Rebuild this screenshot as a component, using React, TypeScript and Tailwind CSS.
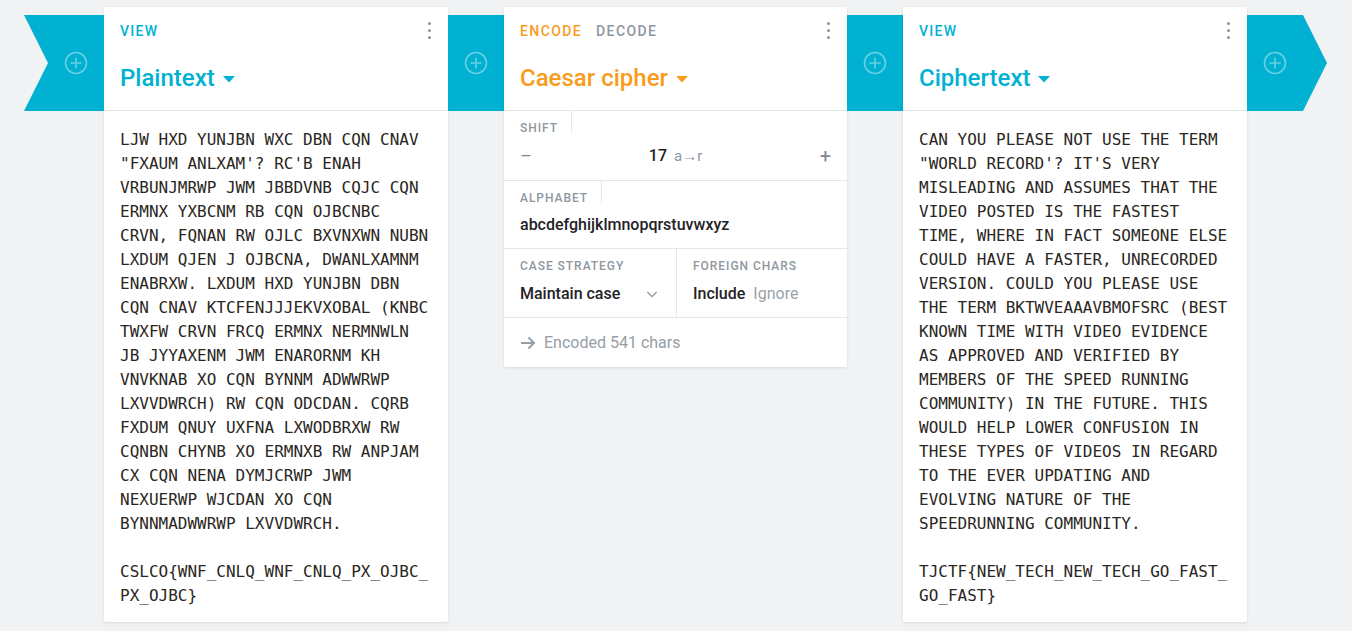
import React from "react";

const plainLines = [
  "LJW HXD YUNJBN WXC DBN CQN CNAV",
  "\"FXAUM ANLXAM'? RC'B ENAH",
  "VRBUNJMRWP JWM JBBDVNB CQJC CQN",
  "ERMNX YXBCNM RB CQN OJBCNBC",
  "CRVN, FQNAN RW OJLC BXVNXWN NUBN",
  "LXDUM QJEN J OJBCNA, DWANLXAMNM",
  "ENABRXW. LXDUM HXD YUNJBN DBN",
  "CQN CNAV KTCFENJJJEKVXOBAL (KNBC",
  "TWXFW CRVN FRCQ ERMNX NERMNWLN",
  "JB JYYAXENM JWM ENARORNM KH",
  "VNVKNAB XO CQN BYNNM ADWWRWP",
  "LXVVDWRCH) RW CQN ODCDAN. CQRB",
  "FXDUM QNUY UXFNA LXWODBRXW RW",
  "CQNBN CHYNB XO ERMNXB RW ANPJAM",
  "CX CQN NENA DYMJCRWP JWM",
  "NEXUERWP WJCDAN XO CQN",
  "BYNNMADWWRWP LXVVDWRCH.",
  "",
  "CSLCO{WNF_CNLQ_WNF_CNLQ_PX_OJBC_",
  "PX_OJBC}",
];

const cipherLines = [
  "CAN YOU PLEASE NOT USE THE TERM",
  "\"WORLD RECORD'? IT'S VERY",
  "MISLEADING AND ASSUMES THAT THE",
  "VIDEO POSTED IS THE FASTEST",
  "TIME, WHERE IN FACT SOMEONE ELSE",
  "COULD HAVE A FASTER, UNRECORDED",
  "VERSION. COULD YOU PLEASE USE",
  "THE TERM BKTWVEAAAVBMOFSRC (BEST",
  "KNOWN TIME WITH VIDEO EVIDENCE",
  "AS APPROVED AND VERIFIED BY",
  "MEMBERS OF THE SPEED RUNNING",
  "COMMUNITY) IN THE FUTURE. THIS",
  "WOULD HELP LOWER CONFUSION IN",
  "THESE TYPES OF VIDEOS IN REGARD",
  "TO THE EVER UPDATING AND",
  "EVOLVING NATURE OF THE",
  "SPEEDRUNNING COMMUNITY.",
  "",
  "TJCTF{NEW_TECH_NEW_TECH_GO_FAST_",
  "GO_FAST}",
];

const PlusCircle = () => (
  <svg width="24" height="24" viewBox="0 0 24 24" fill="none">
    <circle cx="12" cy="12" r="10.5" stroke="rgba(255,255,255,0.4)" strokeWidth="1.6" />
    <path d="M12 6.5v11M6.5 12h11" stroke="rgba(255,255,255,0.4)" strokeWidth="1.6" />
  </svg>
);

const Kebab = () => (
  <div className="flex flex-col items-center gap-[4px]">
    <span className="size-[3px] rounded-full bg-[#8e9297]" />
    <span className="size-[3px] rounded-full bg-[#8e9297]" />
    <span className="size-[3px] rounded-full bg-[#8e9297]" />
  </div>
);

const Caret = ({ color }: { color: string }) => (
  <svg width="12" height="7" viewBox="0 0 12 7" className="ml-[8px] mt-[2px]">
    <path d="M0 0h12L6 6.5z" fill={color} />
  </svg>
);

const FieldLabel = ({ children }: { children: React.ReactNode }) => (
  <div className="flex h-[22px]">
    <div className="border-r border-[#e3e7eb] pr-[13px] pt-[11px] text-[12px] leading-[12px] font-medium tracking-[0.08em] text-[#8e979f] uppercase">
      {children}
    </div>
  </div>
);

const TextCard = ({ title, lines }: { title: string; lines: string[] }) => (
  <div className="mt-[7px] w-[344px] shrink-0 rounded-[2px] bg-white shadow-[0_1px_3px_rgba(0,0,0,0.1)]">
    <div className="h-[104px] border-b border-[#e3e7eb] px-4 pt-[16px]">
      <div className="flex h-[16px] items-center justify-between">
        <span className="text-[14px] font-medium tracking-[0.09em] text-[#00b1d2]">VIEW</span>
        <div className="-mt-[2px] pr-[1px]">
          <Kebab />
        </div>
      </div>
      <div className="mt-[24px] flex h-[30px] items-center text-[24px] font-medium text-[#00b1d2]">
        {title}
        <Caret color="#00b1d2" />
      </div>
    </div>
    <div className="px-4 pt-[17px] pb-[14px] font-['DejaVu_Sans_Mono',monospace] text-[16px] leading-[24px] text-[#2a2622]">
      {lines.map((line, i) => (
        <div key={i} className="h-[24px] whitespace-pre">
          {line}
        </div>
      ))}
    </div>
  </div>
);

const Gap = () => (
  <div className="mt-[15px] flex h-[96px] w-[56px] shrink-0 items-center justify-center bg-[#00b1d2]">
    <PlusCircle />
  </div>
);

const CaesarCard = () => (
  <div className="mt-[7px] w-[343px] shrink-0 rounded-[2px] bg-white shadow-[0_1px_3px_rgba(0,0,0,0.1)]">
    <div className="h-[104px] border-b border-[#e3e7eb] px-4 pt-[16px]">
      <div className="flex h-[16px] items-center justify-between">
        <div className="flex gap-[14px] text-[14px] font-medium tracking-[0.1em]">
          <span className="text-[#f99c1c]">ENCODE</span>
          <span className="text-[#8e979f]">DECODE</span>
        </div>
        <div className="-mt-[2px] pr-[1px]">
          <Kebab />
        </div>
      </div>
      <div className="mt-[24px] flex h-[30px] items-center text-[24px] font-medium text-[#f99c1c]">
        Caesar cipher
        <Caret color="#f99c1c" />
      </div>
    </div>

    <div className="h-[70px] border-b border-[#e3e7eb] px-4">
      <FieldLabel>Shift</FieldLabel>
      <div className="mt-[11px] flex h-[24px] items-center justify-between text-[#7f878f]">
        <span className="w-[12px] text-[18px] leading-none">–</span>
        <div className="flex items-baseline gap-[7px]">
          <span className="text-[16px] font-medium text-[#1f2226]">17</span>
          <span className="text-[15px] text-[#8e979f]">a→r</span>
        </div>
        <span className="w-[12px] text-right text-[20px] leading-none">+</span>
      </div>
    </div>

    <div className="h-[68px] border-b border-[#e3e7eb] px-4">
      <FieldLabel>Alphabet</FieldLabel>
      <div className="mt-[10px] flex h-[24px] items-center text-[16px] font-medium text-[#1f2226]">
        abcdefghijklmnopqrstuvwxyz
      </div>
    </div>

    <div className="flex h-[69px] border-b border-[#e3e7eb]">
      <div className="w-[173px] border-r border-[#e3e7eb] px-4">
        <div className="pt-[11px] text-[12px] leading-[12px] font-medium tracking-[0.08em] text-[#8e979f]">
          CASE STRATEGY
        </div>
        <div className="mt-[10px] flex h-[24px] items-center justify-between text-[16px] font-medium text-[#1f2226]">
          Maintain case
          <svg width="16" height="16" viewBox="0 0 24 24" fill="none">
            <path d="M5 9l7 7 7-7" stroke="#8e979f" strokeWidth="2" />
          </svg>
        </div>
      </div>
      <div className="flex-1 px-4">
        <div className="pt-[11px] text-[12px] leading-[12px] font-medium tracking-[0.08em] text-[#8e979f]">
          FOREIGN CHARS
        </div>
        <div className="mt-[10px] flex h-[24px] items-center gap-[8px] text-[16px] font-medium">
          <span className="text-[#1f2226]">Include</span>
          <span className="font-normal text-[#9aa2aa]">Ignore</span>
        </div>
      </div>
    </div>

    <div className="flex h-[49px] items-center gap-[8px] px-4 pt-[1px] text-[16px] text-[#959da5]">
      <svg width="16" height="14" viewBox="0 0 16 14" fill="none">
        <path d="M1 7h13M8.5 1.5 14 7l-5.5 5.5" stroke="#959da5" strokeWidth="2" />
      </svg>
      Encoded 541 chars
    </div>
  </div>
);

export default function App() {
  return (
    <div className="min-h-[631px] w-full bg-[#f1f2f4] font-['Roboto',sans-serif]">
      <div className="flex items-start pl-[24px]">
        <div className="mt-[15px] flex h-[96px] w-[80px] shrink-0 items-center justify-end bg-[#00b1d2] pr-[16px] [clip-path:polygon(0_0,100%_0,100%_100%,0_100%,24px_50%)]">
          <PlusCircle />
        </div>
        <TextCard title="Plaintext" lines={plainLines} />
        <Gap />
        <CaesarCard />
        <Gap />
        <TextCard title="Ciphertext" lines={cipherLines} />
        <div className="mt-[15px] flex h-[96px] w-[80px] shrink-0 items-center bg-[#00b1d2] pl-[16px] [clip-path:polygon(0_0,56px_0,100%_50%,56px_100%,0_100%)]">
          <PlusCircle />
        </div>
      </div>
    </div>
  );
}
